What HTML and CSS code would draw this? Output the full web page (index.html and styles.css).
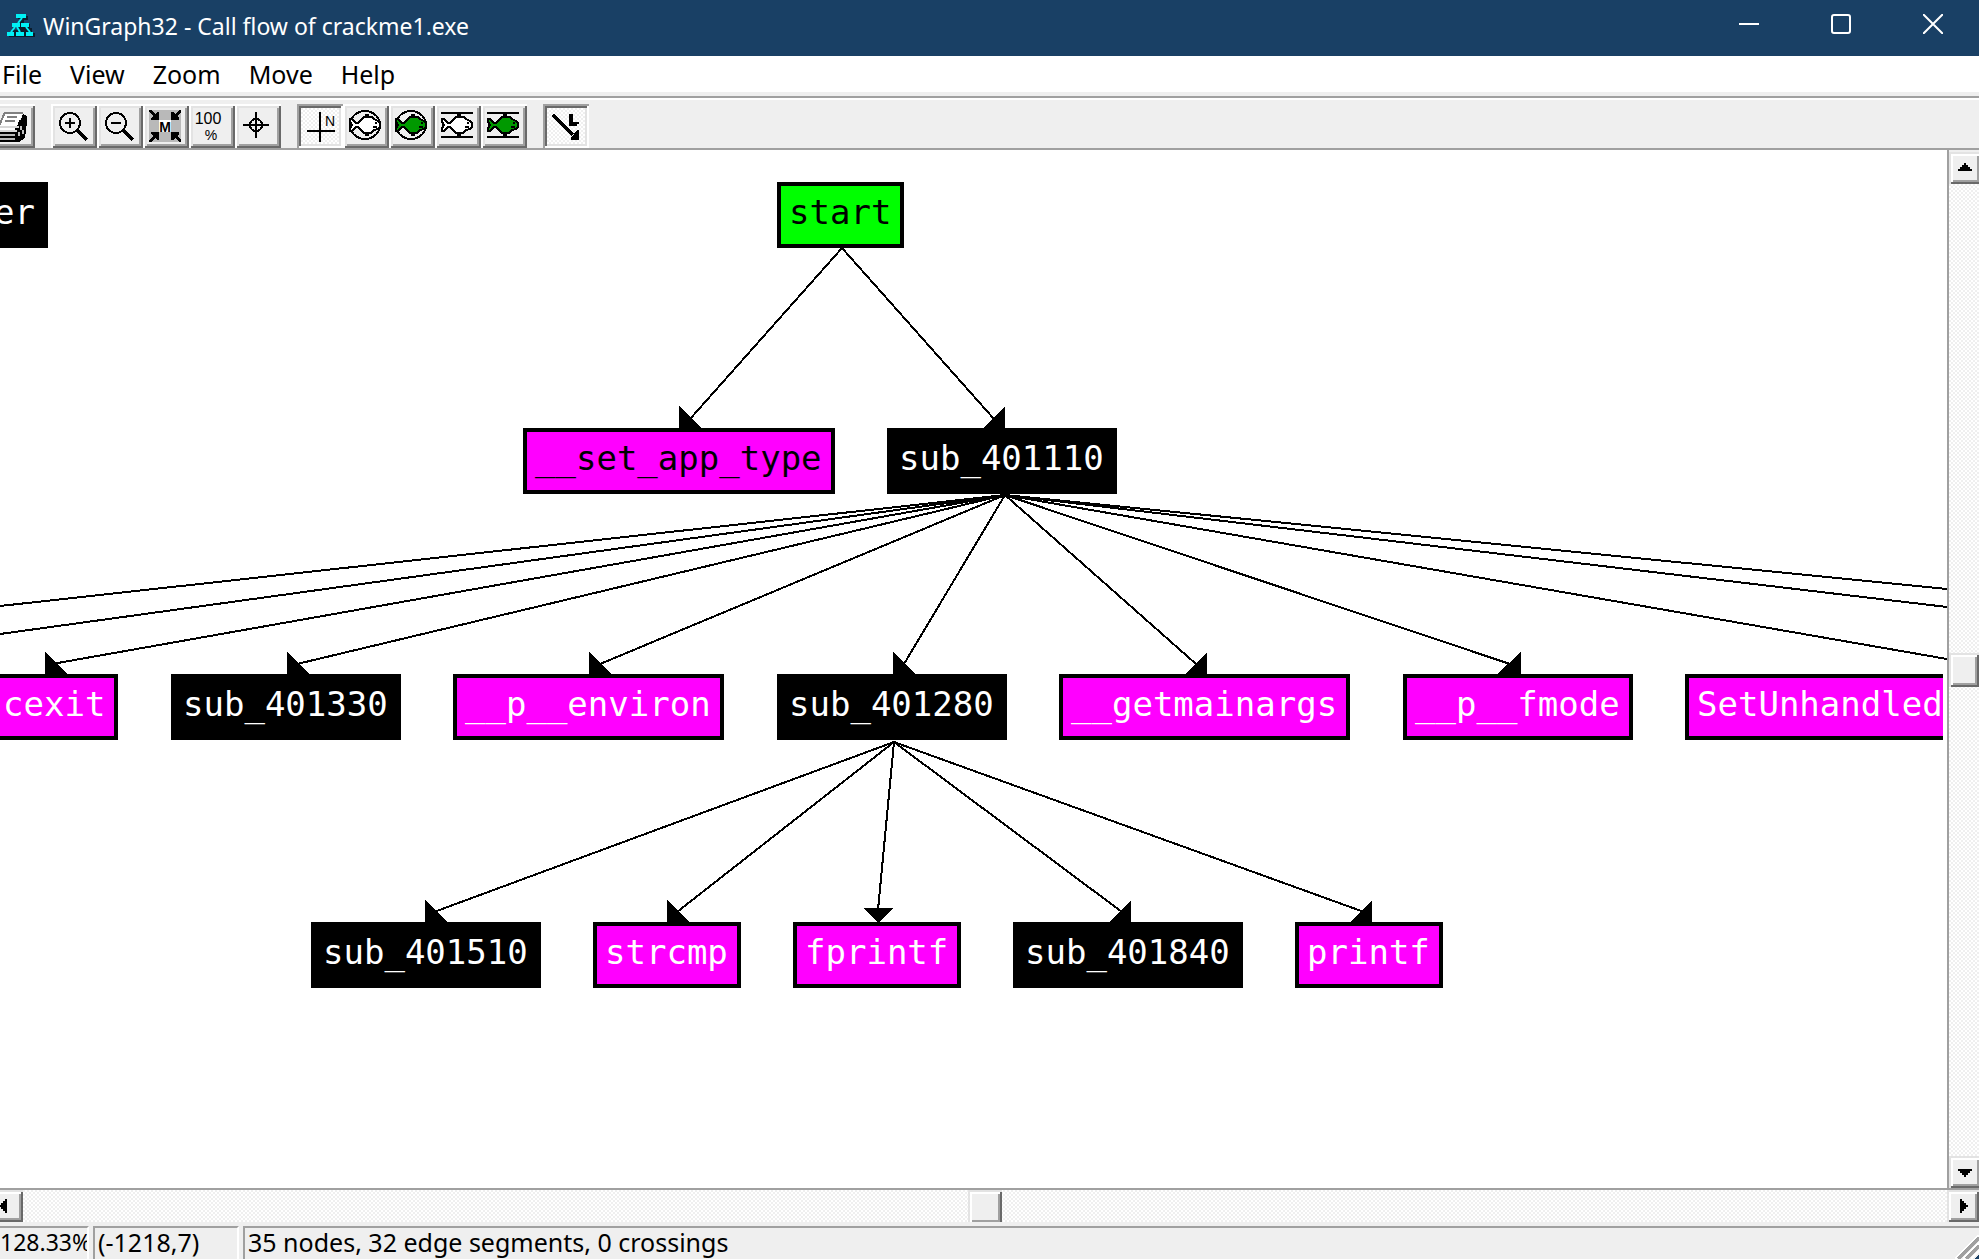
FILE: index.html
```html
<!DOCTYPE html>
<html lang="en">
<head>
<meta charset="utf-8">
<title>WinGraph32 - Call flow of crackme1.exe</title>
<link rel="stylesheet" href="styles.css">
</head>
<body>
<div class="window">
  <header class="titlebar">
    <svg class="app-icon" viewBox="0 0 28 24" aria-hidden="true">
      <path d="M11 3h10v4h-4v4h6v4h2v5h3v4H2v-3h4v-4h4v-6h3V6h-2z" fill="#0b1c2c"/>
      <path d="M9 1h10v4H9zM5 10h8v4H5zM14 10h8v4h-8zM0 19h7v4H0zM9 19h8v4H9zM19 19h7v4h-7z" fill="#00f0f5"/>
      <path d="M15 5l-4 5M8 14l-4 5M10 14l3 5M19 14l4 5" stroke="#00f0f5" stroke-width="2"/>
    </svg>
    <h1 class="title">WinGraph32 - Call flow of crackme1.exe</h1>
    <div class="controls">
      <button class="control" type="button" aria-label="Minimize"><svg viewBox="0 0 20 20"><path d="M0 10h20"/></svg></button>
      <button class="control" type="button" aria-label="Maximize"><svg viewBox="0 0 20 20"><rect x="1" y="1" width="18" height="18" rx="2"/></svg></button>
      <button class="control" type="button" aria-label="Close"><svg viewBox="0 0 20 20"><path d="M0 0l20 20M20 0L0 20"/></svg></button>
    </div>
  </header>

  <nav class="menubar" aria-label="Menu">
    <button type="button">File</button>
    <button type="button">View</button>
    <button type="button">Zoom</button>
    <button type="button">Move</button>
    <button type="button">Help</button>
  </nav>

  <div class="toolbar" role="toolbar" aria-label="Graph tools">
    <div class="group">
      <button class="tool" type="button" aria-label="Print">
        <svg viewBox="0 0 23 22">
          <path d="M4 10l3-2h9l1-3 2 1v3l-1 8-3 2H4l-1-2v-5z" fill="#000"/>
          <path d="M8 4h9l-3 7H5z" fill="#fff"/>
          <path d="M8 4.500h9M8 4l-3 7" stroke="#808080" fill="none"/>
          <path d="M9 6.500h5M8 8.500h5" stroke="#808080"/>
          <path d="M3 11.500h12M3 13.500h11" stroke="#d8d8d8"/>
          <path d="M3 12.500h10" stroke="#fff"/>
          <path d="M3 15.500h10M5 17.500h8" stroke="#b8b8b8"/>
          <path d="M16 11v2M15 14v2M17 13v2" stroke="#c0c0c0"/>
        </svg>
      </button>
    </div>
    <div class="group">
      <button class="tool" type="button" aria-label="Zoom in">
        <svg viewBox="0 0 23 22"><circle cx="9.500" cy="9.500" r="5" fill="none" stroke="#000"/><path d="M7 9.500h5M9.500 7v5" stroke="#000"/><path d="M13 13l5 5" stroke="#000" stroke-width="1.500"/></svg>
      </button>
      <button class="tool" type="button" aria-label="Zoom out">
        <svg viewBox="0 0 23 22"><circle cx="9.500" cy="9.500" r="5" fill="none" stroke="#000"/><path d="M7 9.500h5" stroke="#000"/><path d="M13 13l5 5" stroke="#000" stroke-width="1.500"/></svg>
      </button>
      <button class="tool" type="button" aria-label="Fit window">
        <svg viewBox="0 0 23 22">
          <path d="M3 3h16v16H3z" fill="#b9b9b9"/><path d="M8 8h6v6H8z" fill="#fff"/>
          <path d="M3 3h1l2 2 1-1h1v4H4V7l1-1-2-2zM19 3h-1l-2 2-1-1h-1v4h4V7l-1-1 2-2zM3 19h1l2-2 1 1h1v-4H4v1l1 1-2 2zM19 19h-1l-2-2-1 1h-1v-4h4v1l-1 1 2 2z"/>
          <text x="11" y="14" text-anchor="middle" font-size="7" font-weight="700">M</text>
        </svg>
      </button>
      <button class="tool" type="button" aria-label="Zoom 100%">
        <svg viewBox="0 0 23 22">
          <text x="9.500" y="10" text-anchor="middle" font-size="8">100</text>
          <text x="11" y="18" text-anchor="middle" font-size="7">%</text>
        </svg>
      </button>
      <button class="tool" type="button" aria-label="Center">
        <svg viewBox="0 0 23 22"><circle cx="10.500" cy="10.500" r="3" fill="none" stroke="#000"/><path d="M4 10.500h13M10.500 4v13" stroke="#000"/></svg>
      </button>
    </div>
    <div class="group">
      <button class="tool pressed" type="button" aria-pressed="true" aria-label="Normal layout">
        <svg viewBox="0 0 23 22"><path d="M11.500 4v15M5 13.500h14" stroke="#000"/><text x="16.500" y="11" text-anchor="middle" font-size="7">N</text></svg>
      </button>
      <button class="tool" type="button" aria-label="Polar fisheye">
        <svg viewBox="0 0 23 22"><ellipse cx="11" cy="10.500" rx="7.500" ry="7" fill="none" stroke="#000"/><use href="#fish" fill="#fff"/></svg>
      </button>
      <button class="tool" type="button" aria-label="Filled polar fisheye">
        <svg viewBox="0 0 23 22"><ellipse cx="11" cy="10.500" rx="7.500" ry="7" fill="none" stroke="#000"/><use href="#fish" fill="#009900"/></svg>
      </button>
      <button class="tool" type="button" aria-label="Cartesian fisheye">
        <svg viewBox="0 0 23 22"><path d="M3 4.500h16M3 16.500h16" stroke="#000"/><use href="#fish" fill="#fff"/></svg>
      </button>
      <button class="tool" type="button" aria-label="Filled cartesian fisheye">
        <svg viewBox="0 0 23 22"><path d="M3 4.500h16M3 16.500h16" stroke="#000"/><use href="#fish" fill="#009900"/></svg>
      </button>
    </div>
    <div class="group">
      <button class="tool pressed" type="button" aria-pressed="true" aria-label="Layout direction">
        <svg viewBox="0 0 23 22"><path d="M5 5.500l10 10" stroke="#000" stroke-width="1.500"/><path d="M18 13v5h-4v-1l3-4z"/><path d="M13 5h2v4h1V9h2v1h-1v1h-4z"/></svg>
      </button>
    </div>
    <svg class="defs" aria-hidden="true">
      <g id="fish" stroke="#000">
        <path d="M3.500 7.500L4.500 7.500L6.500 9.500L7.500 9.500L10.500 6.500H14.500L15.500 7.500L17.500 8.500L18.500 9.500V11.500L17.500 12.500L15.500 13L14 14.500H10.500L7.500 11.500L6.500 11.500L4.500 13.500H3.500V12L4.500 10.500L3.500 9Z"/>
        <path d="M11 5.500h2M11 15.500h2M16 9.500h1M15 11.500h2" fill="none"/>
      </g>
    </svg>
  </div>

  <div class="workspace">
    <main class="canvas">
      <svg class="edges" aria-hidden="true">
        <g class="lines">
          <path d="M842 98L690 269M842 98L994 269"/>
          <path d="M1005 345L0 456M1005 345L0 484M1005 345L52 514M1005 345L297 514M1005 345L600 514M1005 345L904 514M1005 345L1196 514M1005 345L1510 514M1005 345L1947 509M1005 345L1947 457M1005 345L1947 439"/>
          <path d="M894 592L434 762M894 592L677 762M894 592L878 760M894 592L1122 762M894 592L1364 762"/>
        </g>
        <path d="M679 256v22h22zM1005 256v22h-22zM45 502v22h22zM287 502v22h22zM589 502v22h22zM893 502v22h22zM1207 502v22h-22zM1521 502v22h-24zM425 750v22h22zM667 750v22h22zM1131 750v22h-22zM1372 750v22h-22zM863 758h30l-15 15z"/>
      </svg>
      <div class="node sub n-filter">er</div>
      <div class="node entry n-start">start</div>
      <div class="node import dark-text n-apptype">__set_app_type</div>
      <div class="node sub n-401110">sub_401110</div>
      <div class="node import n-cexit">cexit</div>
      <div class="node sub n-401330">sub_401330</div>
      <div class="node import n-environ">__p__environ</div>
      <div class="node sub n-401280">sub_401280</div>
      <div class="node import n-mainargs">__getmainargs</div>
      <div class="node import n-fmode">__p__fmode</div>
      <div class="node import n-unhandled">SetUnhandled</div>
      <div class="node sub n-401510">sub_401510</div>
      <div class="node import n-strcmp">strcmp</div>
      <div class="node import n-fprintf">fprintf</div>
      <div class="node sub n-401840">sub_401840</div>
      <div class="node import n-printf">printf</div>
    </main>
    <div class="scroll vertical">
      <button class="scroll-button" type="button" aria-label="Scroll up"><svg viewBox="0 0 7 7"><path d="M3 1h1v1h1v1h1v1h1v1H0V4h1V3h1V2h1z"/></svg></button>
      <div class="track"><div class="thumb"></div></div>
      <button class="scroll-button" type="button" aria-label="Scroll down"><svg viewBox="0 0 7 7"><path d="M0 2h7v1H6v1H5v1H4v1H3V5H2V4H1V3H0z"/></svg></button>
    </div>
    <div class="scroll horizontal">
      <button class="scroll-button first" type="button" aria-label="Scroll left"><svg viewBox="0 0 7 7"><path d="M4 0h1v7H4V6H3V5H2V4H1V3h1V2h1V1h1z"/></svg></button>
      <div class="track"><div class="thumb"></div></div>
      <button class="scroll-button" type="button" aria-label="Scroll right"><svg viewBox="0 0 7 7"><path d="M2 0h1v1h1v1h1v1h1v1H5v1H4v1H3v1H2z"/></svg></button>
    </div>
  </div>

  <footer class="statusbar">
    <div class="panel zoom">128.33%</div>
    <div class="panel position">(-1218,7)</div>
    <div class="panel summary">35 nodes, 32 edge segments, 0 crossings</div>
    <svg class="grip" viewBox="0 0 24 24" aria-hidden="true">
      <path d="M0 24L24 0M8 24L24 8M16 24l8-8" stroke="#fff" stroke-width="2"/>
      <path d="M3 24L24 3M11 24l13-13" stroke="#a0a0a0" stroke-width="4"/>
      <path d="M19 24l5-5v5z" fill="#194065"/>
    </svg>
  </footer>
</div>
</body>
</html>
```

FILE: styles.css
```css
:root {
  --face: #efefef;
  --light: #e3e3e3;
  --shadow: #a0a0a0;
  --dark: #696969;
  --checker: repeating-conic-gradient(#fff 0 25%, #efefef 0 50%) 0 0 / 4px 4px;
}

* { box-sizing: border-box; }

body {
  margin: 0;
  font: 25px/32px "Noto Sans", "Open Sans", sans-serif;
  color: #000;
}

button {
  margin: 0;
  padding: 0;
  border: 0;
  background: none;
  color: inherit;
  font: inherit;
}

.window {
  display: flex;
  flex-direction: column;
  height: 100vh;
  overflow: hidden;
  background: var(--face);
}

/* Title bar */
.titlebar {
  display: flex;
  align-items: center;
  height: 56px;
  flex: none;
  padding-left: 7px;
  background: #194065;
  color: #fff;
}
.app-icon { width: 28px; height: 24px; margin-bottom: 6px; }
.title {
  flex: 1;
  margin: 0 0 4px 8px;
  font: 400 23px/32px "Noto Sans", "Open Sans", sans-serif;
}
.controls { display: flex; height: 100%; }
.control {
  display: grid;
  place-items: center;
  width: 92px;
  padding-bottom: 8px;
}
.control svg {
  width: 20px;
  height: 20px;
  fill: none;
  stroke: #fff;
  stroke-width: 2;
}

/* Menu */
.menubar {
  display: flex;
  gap: 28px;
  height: 36px;
  flex: none;
  padding: 2px;
  background: #fff;
}

/* Toolbar */
.toolbar {
  display: flex;
  gap: 16px;
  flex: none;
  margin: 4px 0 0 -11px;
  padding-top: 6px;
  height: 54px;
  border-top: 2px solid var(--shadow);
  border-bottom: 2px solid var(--shadow);
  box-shadow: inset 0 2px #fff;
}
.group { display: flex; }
.tool {
  width: 46px;
  height: 44px;
  box-shadow: inset 2px 2px #fff, inset -2px -2px var(--dark),
    inset 4px 4px var(--light), inset -4px -4px var(--shadow);
}
.tool.pressed {
  background: var(--checker);
  box-shadow: inset 2px 2px var(--shadow), inset -2px -2px #fff,
    inset 4px 4px var(--dark), inset -4px -4px var(--light);
}
.tool svg {
  display: block;
  width: 46px;
  height: 44px;
  shape-rendering: crispEdges;
  font-family: "Liberation Sans", sans-serif;
}
.defs { position: absolute; width: 0; height: 0; }

/* Graph area */
.workspace {
  display: grid;
  grid-template: minmax(0, 1fr) 34px / minmax(0, 1fr) 32px;
  flex: 1;
  min-height: 0;
}
.canvas {
  position: relative;
  overflow: hidden;
  background: #fff;
}
.edges {
  position: absolute;
  inset: 0;
  width: 100%;
  height: 100%;
  shape-rendering: crispEdges;
}
.lines { stroke: #000; stroke-width: 2; fill: none; }

.node {
  position: absolute;
  height: 66px;
  padding: 0 9px 0 8px;
  border: 4px solid #000;
  font: 34px/52px "DejaVu Sans Mono", "Liberation Mono", monospace;
  white-space: pre;
}
.sub { background: #000; color: #fff; }
.import { background: #f0f; color: #fff; }
.entry { background: #0f0; }
.dark-text { color: #000; }

.n-filter { left: -18px; top: 32px; }
.n-start { left: 777px; top: 32px; }
.n-apptype { left: 523px; top: 278px; }
.n-401110 { left: 887px; top: 278px; }
.n-cexit { left: -9px; top: 524px; }
.n-401330 { left: 171px; top: 524px; }
.n-environ { left: 453px; top: 524px; }
.n-401280 { left: 777px; top: 524px; }
.n-mainargs { left: 1059px; top: 524px; }
.n-fmode { left: 1403px; top: 524px; }
.n-unhandled {
  left: 1685px;
  top: 524px;
  padding-right: 0;
  border-right: 0;
}
.n-401510 { left: 311px; top: 772px; }
.n-strcmp { left: 593px; top: 772px; }
.n-fprintf { left: 793px; top: 772px; }
.n-401840 { left: 1013px; top: 772px; }
.n-printf { left: 1295px; top: 772px; }

/* Scroll bars */
.scroll { display: flex; overflow: hidden; }
.vertical {
  flex-direction: column;
  padding-top: 2px;
  border-left: 2px solid var(--shadow);
}
.horizontal {
  grid-column: 1 / -1;
  border-top: 2px solid var(--shadow);
}
.track {
  display: flex;
  flex: 1;
  background: var(--checker);
}
.thumb {
  width: 34px;
  height: 34px;
  margin: auto;
}
.scroll-button {
  display: grid;
  place-items: center;
  flex: none;
  width: 32px;
  height: 32px;
}
.scroll-button.first { width: 23px; justify-items: start; }
.thumb, .scroll-button {
  background: var(--face);
  box-shadow: inset 2px 2px var(--light), inset -2px -2px var(--dark),
    inset 4px 4px #fff, inset -4px -4px var(--shadow);
}
.scroll-button.first { box-shadow: inset 0 2px var(--light), inset -2px -2px var(--dark), inset 0 4px #fff, inset -4px -4px var(--shadow); }
.scroll-button svg { width: 14px; height: 14px; shape-rendering: crispEdges; }
.scroll-button.first svg { margin-left: -3px; }

/* Status bar */
.statusbar {
  display: flex;
  gap: 4px;
  flex: none;
  height: 37px;
  padding-top: 4px;
}
.panel {
  height: 33px;
  padding-left: 3px;
  overflow: hidden;
  border: solid;
  border-width: 2px 2px 0;
  border-color: var(--shadow) #fff #fff var(--shadow);
  line-height: 29px;
  white-space: nowrap;
}
.zoom {
  width: 89px;
  padding: 0;
  border-left: 0;
  font-size: 23px;
}
.position { width: 146px; }
.summary { flex: 1; border-right: 0; margin-right: -28px; }
.grip { width: 24px; height: 24px; margin-top: auto; shape-rendering: crispEdges; }
```
